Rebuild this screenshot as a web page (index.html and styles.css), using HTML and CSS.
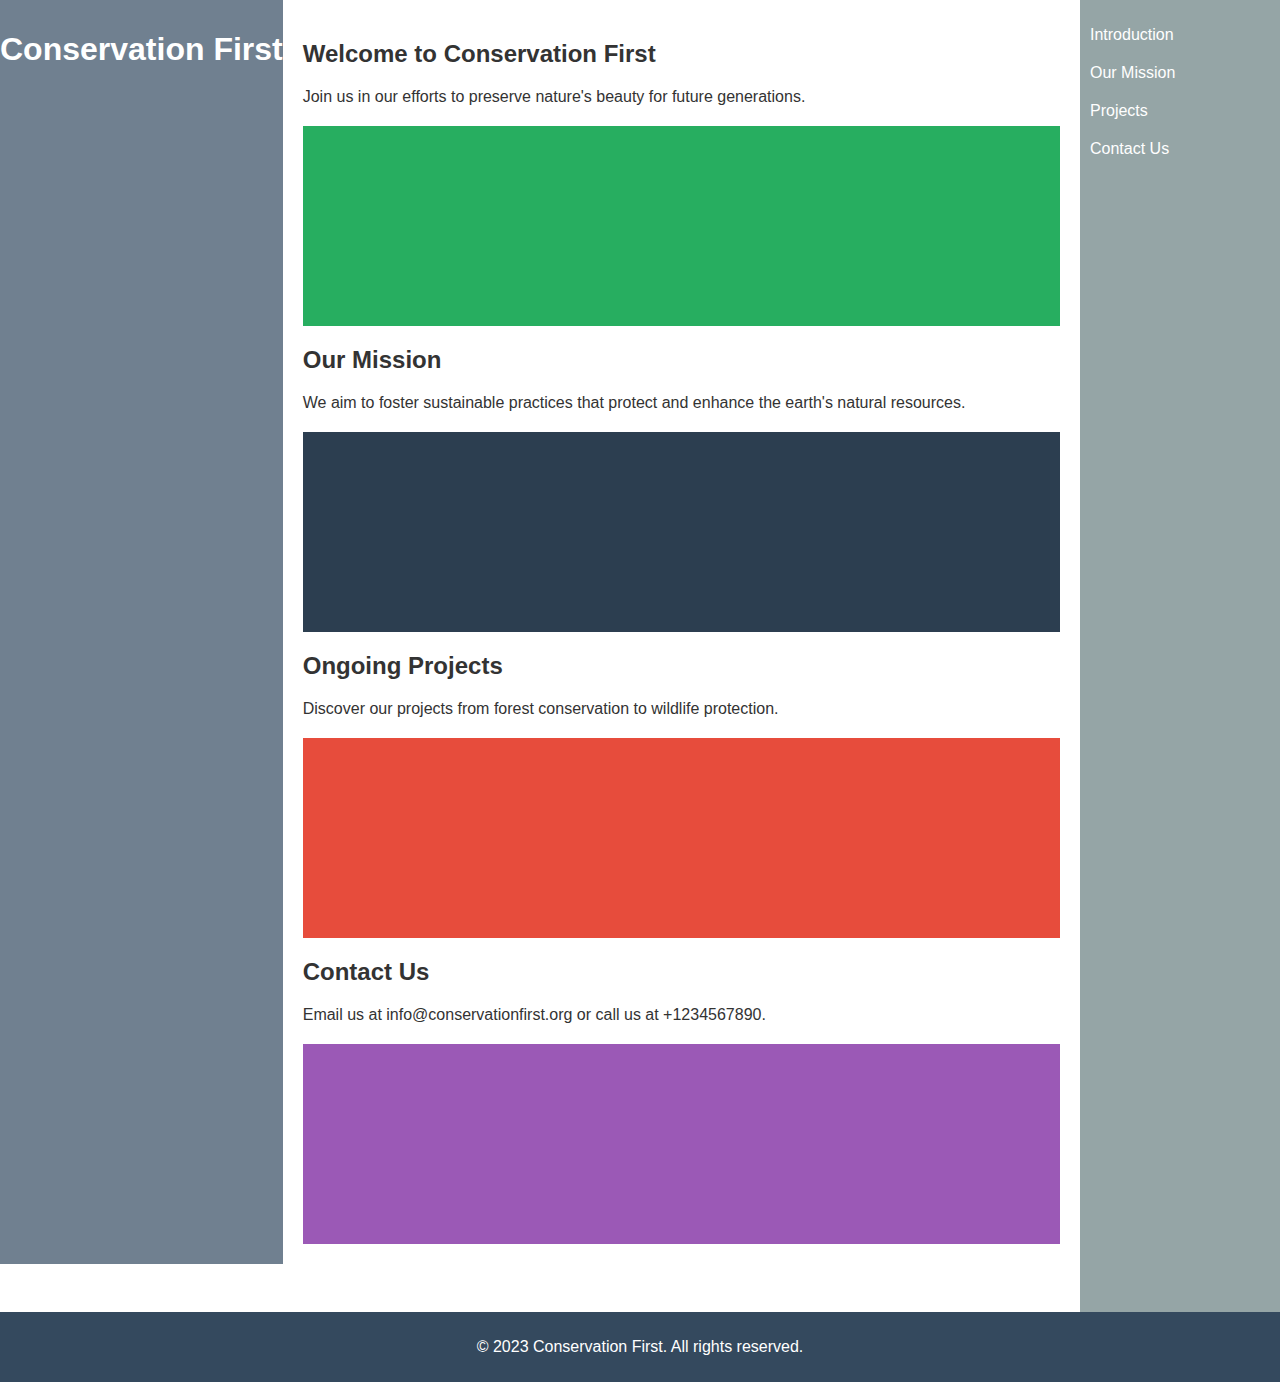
FILE: index.html
```html
<!DOCTYPE html>
<html lang="en">
<head>
<meta charset="utf-8">
<title>Conservation First</title>
<link rel="stylesheet" href="styles.css">
</head>
<body>
<div class="layout">
  <header class="site-header">
    <h1 class="site-title">Conservation First</h1>
  </header>
  <main class="content">
    <section class="section">
      <h2>Welcome to Conservation First</h2>
      <p>Join us in our efforts to preserve nature's beauty for future generations.</p>
      <div class="block block-green"></div>
    </section>
    <section class="section">
      <h2>Our Mission</h2>
      <p>We aim to foster sustainable practices that protect and enhance the earth's natural resources.</p>
      <div class="block block-navy"></div>
    </section>
    <section class="section">
      <h2>Ongoing Projects</h2>
      <p>Discover our projects from forest conservation to wildlife protection.</p>
      <div class="block block-red"></div>
    </section>
    <section class="section">
      <h2>Contact Us</h2>
      <p>Email us at info@conservationfirst.org or call us at +1234567890.</p>
      <div class="block block-purple"></div>
    </section>
  </main>
  <nav class="side-nav">
    <ul>
      <li><a href="#">Introduction</a></li>
      <li><a href="#">Our Mission</a></li>
      <li><a href="#">Projects</a></li>
      <li><a href="#">Contact Us</a></li>
    </ul>
  </nav>
</div>
<footer class="site-footer">
  <p>© 2023 Conservation First. All rights reserved.</p>
</footer>
</body>
</html>
```
FILE: styles.css
```css
html, body {
  margin: 0;
  padding: 0;
}
body {
  font-family: "Liberation Sans", Arial, sans-serif;
  color: #333333;
  background: #ffffff;
}
.layout {
  display: flex;
  align-items: stretch;
}
.site-header {
  flex: 0 0 auto;
  background: #708090;
  padding: 10px 0;
  margin-bottom: 48px;
  box-sizing: border-box;
}
.site-title {
  margin: 21px 0;
  font-size: 32px;
  font-weight: bold;
  color: #ffffff;
  white-space: nowrap;
  line-height: 37px;
}
.content {
  flex: 1 1 auto;
  padding: 20px 20px 48px;
}
.section h2 {
  font-size: 24px;
  font-weight: bold;
  margin: 20px 0;
  line-height: 28px;
  color: #333333;
}
.section p {
  font-size: 16px;
  line-height: 18px;
  margin: 16px 0;
}
.block {
  height: 200px;
  margin: 20px 0;
}
.block-green { background: #27ae60; }
.block-navy { background: #2c3e50; }
.block-red { background: #e74c3c; }
.block-purple { background: #9b59b6; }
.side-nav {
  flex: 0 0 200px;
  background: #95a5a6;
  padding: 16px 10px 15px;
  box-sizing: border-box;
}
.side-nav ul {
  list-style: none;
  margin: 0;
  padding: 0;
}
.side-nav a {
  display: block;
  padding: 10px 0;
  line-height: 18px;
  font-size: 16px;
  color: #ffffff;
  text-decoration: none;
}
.site-footer {
  background: #34495e;
  color: #ffffff;
  text-align: center;
  padding: 25px 0;
}
.site-footer p {
  margin: 0;
  font-size: 16px;
  line-height: 20px;
}
```
